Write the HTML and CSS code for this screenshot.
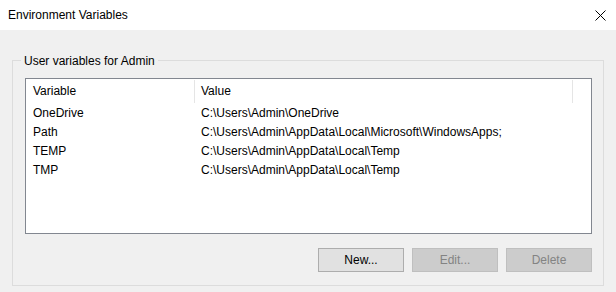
FILE: index.html
```html
<!DOCTYPE html>
<html lang="en">
<head>
    <meta charset="UTF-8">
    <title>Environment Variables</title>
    <link rel="stylesheet" href="styles.css">
</head>
<body>

    <!-- title bar -->
    <div class="titlebar">
        <span class="title">Environment Variables</span>
        <span class="close">
            <svg width="11" height="11" viewBox="0 0 11 11"><path d="M0.5 0.5 L10.5 10.5 M10.5 0.5 L0.5 10.5" stroke="#000" stroke-width="1" fill="none"/></svg>
        </span>
    </div>

    <div class="group">
        <div class="group-label">User variables for Admin</div>

        <div class="listview">
            <div class="lv-head">
                <div class="lv-col col-name">Variable</div>
                <div class="lv-col col-value">Value</div>
                <div class="lv-col col-rest"></div>
            </div>
            <div class="lv-row"><span class="col-name">OneDrive</span><span class="col-value">C:\Users\Admin\OneDrive</span></div>
            <div class="lv-row"><span class="col-name">Path</span><span class="col-value">C:\Users\Admin\AppData\Local\Microsoft\WindowsApps;</span></div>
            <div class="lv-row"><span class="col-name">TEMP</span><span class="col-value">C:\Users\Admin\AppData\Local\Temp</span></div>
            <div class="lv-row"><span class="col-name">TMP</span><span class="col-value">C:\Users\Admin\AppData\Local\Temp</span></div>
        </div>

        <div class="buttons">
            <button type="button">New...</button>
            <button type="button" disabled>Edit...</button>
            <button type="button" disabled>Delete</button>
        </div>
    </div>

</body>
</html>
```

FILE: styles.css
```css
body {
    margin: 0;
    width: 616px;
    height: 292px;
    background: #f0f0f0;
    font-family: "Liberation Sans", Arial, sans-serif;
    font-size: 12px;
    color: #000;
    overflow: hidden;
}

.titlebar {
    height: 30px;
    background: #fff;
    display: flex;
    align-items: center;
    justify-content: space-between;
    padding-left: 8px;
}
.close {
    width: 30px;
    height: 30px;
    margin-right: 1px;
    display: flex;
    align-items: center;
    justify-content: center;
}

/* group box */
.group {
    margin: 30px 0 0 12px;
    width: 592px;
    height: 226px;
    box-sizing: border-box;
    border: 1px solid #dcdcdc;
    padding: 0 11px 0 12px;
}
.group-label {
    margin: -8px 0 0 -4px;
    width: fit-content;
    height: 16px;
    line-height: 16px;
    padding: 0 3px 0 3px;
    background: #f0f0f0;
}

.listview {
    margin-top: 9px;
    width: 567px;
    height: 156px;
    box-sizing: border-box;
    border: 1px solid #828790;
    background: #fff;
}
.lv-head {
    display: flex;
    height: 25px;
}
.lv-col {
    height: 23px;
    margin-top: 1px;
    line-height: 23px;
    box-sizing: border-box;
}
.lv-head .col-name { width: 169px; border-right: 1px solid #e5e5e5; padding-left: 7px; }
.lv-head .col-value { width: 378px; border-right: 1px solid #e5e5e5; padding-left: 6px; }
.lv-head .col-rest { flex: 1; }

.lv-row {
    display: flex;
    height: 19px;
    line-height: 19px;
}
.lv-row .col-name { width: 175px; padding-left: 7px; box-sizing: border-box; flex-shrink: 0; }
.lv-row .col-value { white-space: nowrap; }

.buttons {
    display: flex;
    justify-content: flex-end;
    gap: 8px;
    margin-top: 14px;
    width: 567px;
}
button {
    width: 86px;
    height: 24px;
    padding: 0;
    font-family: inherit;
    font-size: 12px;
    color: #000;
    background: #e1e1e1;
    border: 1px solid #adadad;
    border-radius: 0;
}
button:disabled {
    color: #838383;
    background: #cccccc;
    border-color: #bfbfbf;
}
```
